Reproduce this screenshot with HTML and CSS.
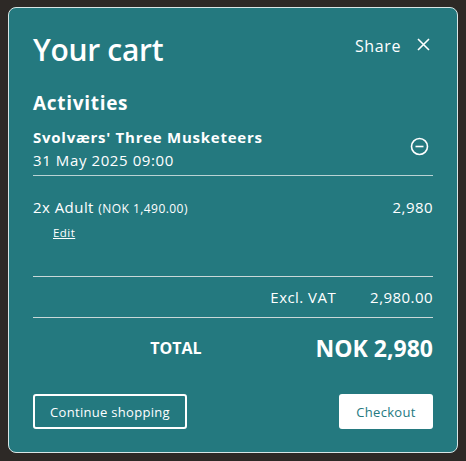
FILE: index.html
```html
<!DOCTYPE html>
<html lang="en">
<head>
    <meta charset="UTF-8">
    <meta name="viewport" content="width=device-width, initial-scale=1.0">
    <title>Your cart</title>
    <link rel="stylesheet" href="styles.css">
</head>
<body>

    <div class="cart-modal">
        <div class="cart-header">
            <h1>Your cart</h1>
            <div class="header-actions">
                <span class="share">Share</span>
                <button class="close-btn" aria-label="Close">
                    <svg width="13" height="13" viewBox="0 0 13 13"><path d="M1 1L12 12M12 1L1 12" stroke="#fff" stroke-width="1.6" fill="none"/></svg>
                </button>
            </div>
        </div>

        <h2>Activities</h2>

        <div class="activity">
            <div class="activity-info">
                <div class="activity-name">Svolværs' Three Musketeers</div>
                <div class="activity-date">31 May 2025 09:00</div>
            </div>
            <button class="remove-btn" aria-label="Remove">
                <svg width="19" height="19" viewBox="0 0 19 19"><circle cx="9.5" cy="9.5" r="8" stroke="#fff" stroke-width="1.6" fill="none"/><path d="M5.5 9.5H13.5" stroke="#fff" stroke-width="1.6"/></svg>
            </button>
        </div>

        <div class="line-item">
            <div>
                <div>2x Adult <span class="unit-price">(NOK 1,490.00)</span></div>
                <a href="#" class="edit-link">Edit</a>
            </div>
            <div>2,980</div>
        </div>

        <div class="summary-row">
            <span>Excl. VAT</span>
            <span class="summary-value">2,980.00</span>
        </div>

        <div class="total-row">
            <span class="total-label">TOTAL</span>
            <span class="total-value">NOK 2,980</span>
        </div>

        <div class="cart-buttons">
            <button class="btn btn-outline">Continue shopping</button>
            <button class="btn btn-solid">Checkout</button>
        </div>
    </div>

</body>
</html>
```

FILE: styles.css
```css
    body {
        margin: 0;
        padding: 7px 8px 8px;
        background-color: #2d2926;
        font-family: "Open Sans", Arial, sans-serif;
        letter-spacing: 0.45px;
        color: #fff;
    }
    .cart-modal {
        background-color: #24797f;
        border: 1px solid #d9e6e6;
        border-radius: 8px;
        padding: 24px 24px 23px;
        height: 446px;
        box-sizing: border-box;
        display: flex;
        flex-direction: column;
    }
    .cart-header {
        display: flex;
        justify-content: space-between;
        align-items: flex-start;
    }
    h1 {
        margin: 0;
        font-size: 30px;
        font-weight: 600;
        line-height: 36px;
        letter-spacing: -0.3px;
    }
    .header-actions {
        display: flex;
        align-items: center;
        gap: 16px;
        padding-top: 3px;
        margin-right: 3px;
    }
    .share {
        font-size: 16px;
        font-weight: 400;
        letter-spacing: 0.6px;
    }
    .close-btn, .remove-btn {
        background: none;
        border: 0;
        padding: 0;
        display: flex;
        cursor: pointer;
    }
    .close-btn {
        margin-top: -4px;
    }
    h2 {
        margin: 22px 0 0;
        font-size: 19px;
        font-weight: 700;
        line-height: 26px;
        letter-spacing: 0.7px;
    }
    .activity {
        display: flex;
        justify-content: space-between;
        align-items: center;
        margin-top: 10px;
        padding-bottom: 4px;
        border-bottom: 1px solid #b9d3d4;
    }
    .activity-name {
        font-size: 15px;
        font-weight: 700;
        line-height: 22px;
        letter-spacing: 0.75px;
    }
    .activity-date {
        font-size: 15px;
        line-height: 22px;
        margin-top: 1px;
        letter-spacing: 0.6px;
    }
    .remove-btn {
        margin-right: 4px;
        margin-top: -5px;
    }
    .line-item {
        display: flex;
        justify-content: space-between;
        font-size: 15px;
        line-height: 22px;
        padding-top: 20px;
        padding-bottom: 34px;
        border-bottom: 1px solid #c9d8d8;
    }
    .unit-price {
        font-size: 12px;
    }
    .edit-link {
        display: inline-block;
        margin: 3px 0 0 20px;
        color: #fff;
        font-size: 11.5px;
        line-height: 14px;
    }
    .summary-row {
        display: flex;
        justify-content: flex-end;
        gap: 34px;
        font-size: 15px;
        line-height: 40px;
        border-bottom: 1px solid #c9d8d8;
    }
    .total-row {
        display: flex;
        justify-content: flex-end;
        align-items: center;
        gap: 114px;
        margin-top: 14px;
    }
    .total-label {
        font-size: 16px;
        font-weight: 700;
        letter-spacing: 0;
    }
    .total-value {
        font-size: 23px;
        font-weight: 700;
        letter-spacing: 0;
    }
    .cart-buttons {
        margin-top: auto;
        display: flex;
        justify-content: space-between;
    }
    .btn {
        font-family: "Open Sans", Arial, sans-serif;
        font-size: 13px;
        font-weight: 500;
        letter-spacing: 0.3px;
        height: 35px;
        border-radius: 3px;
        cursor: pointer;
    }
    .btn-outline {
        width: 154px;
        background: none;
        border: 2px solid #fff;
        color: #fff;
    }
    .btn-solid {
        width: 94px;
        background-color: #fff;
        border: 0;
        color: #24797f;
    }
```
